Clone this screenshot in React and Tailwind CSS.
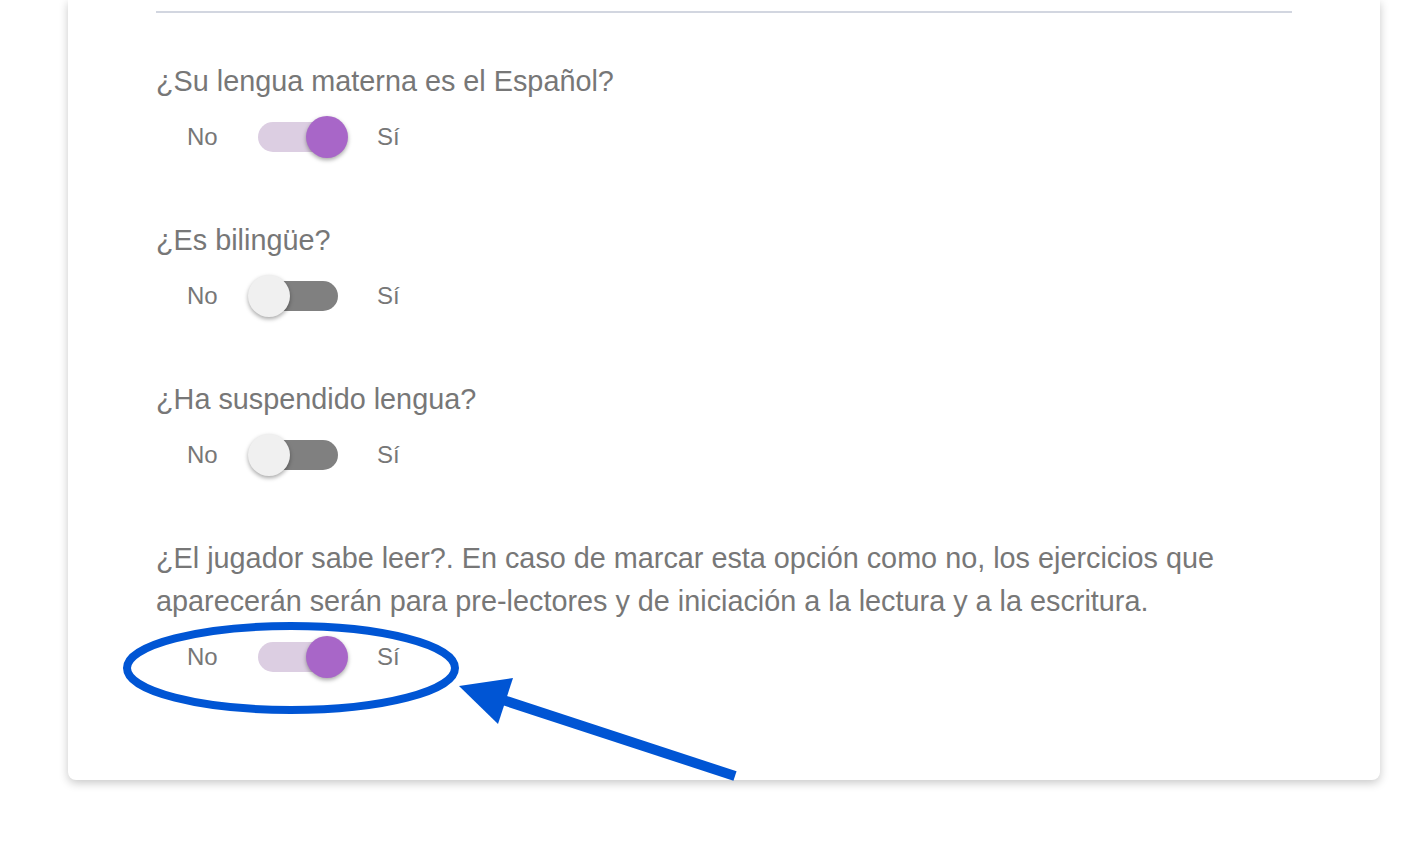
import React from "react";

function Toggle({ on }) {
  return (
    <div className="relative w-[80px] h-[30px]">
      <div className={"absolute inset-0 rounded-full " + (on ? "bg-[#dccee2]" : "bg-[#808080]")} />
      <div
        className={
          "absolute top-[-6px] w-[42px] h-[42px] rounded-full shadow-[0_2px_4px_rgba(0,0,0,0.35)] " +
          (on ? "right-[-10px] bg-[#a866c8]" : "left-[-10px] bg-[#f0f0f0]")
        }
      />
    </div>
  );
}

function ToggleRow({ on }) {
  return (
    <div className="flex items-center h-[44px] pl-[31px] text-[24px] text-[#777777]">
      <span className="w-[71px]">No</span>
      <Toggle on={on} />
      <span className="ml-[39px]">Sí</span>
    </div>
  );
}

function Question({ children, on, className = "" }) {
  return (
    <div className={className}>
      <div className="text-[28.8px] leading-[43px] text-[#777777]">{children}</div>
      <div className="mt-[12px]">
        <ToggleRow on={on} />
      </div>
    </div>
  );
}

export default function App() {
  return (
    <div
      className="relative w-[1428px] h-[864px] bg-white overflow-hidden"
      style={{ fontFamily: '"Liberation Sans", Arial, sans-serif' }}
    >
      <div className="ml-[68px] w-[1312px] h-[780px] bg-white rounded-b-[8px] shadow-[0_3px_10px_rgba(0,0,0,0.22)] px-[88px] pt-[11px]">
        <div className="h-[2px] bg-[#d2d6e0]" />
        <div className="pt-[47px]">
          <Question on={true}>¿Su lengua materna es el Español?</Question>
          <Question on={false} className="mt-[60px]">¿Es bilingüe?</Question>
          <Question on={false} className="mt-[60px]">¿Ha suspendido lengua?</Question>
          <Question on={true} className="mt-[60px]">
            ¿El jugador sabe leer?. En caso de marcar esta opción como no, los ejercicios que
            <br />
            aparecerán serán para pre-lectores y de iniciación a la lectura y a la escritura.
          </Question>
        </div>
      </div>
      <svg className="absolute left-0 top-0 pointer-events-none" width="1428" height="864" viewBox="0 0 1428 864">
        <ellipse cx="291" cy="668" rx="164" ry="42" fill="none" stroke="#0055d4" strokeWidth="8" />
        <line x1="735" y1="776" x2="500" y2="699" stroke="#0055d4" strokeWidth="10" />
        <polygon points="459,686 513,678 498,724" fill="#0055d4" />
      </svg>
    </div>
  );
}
